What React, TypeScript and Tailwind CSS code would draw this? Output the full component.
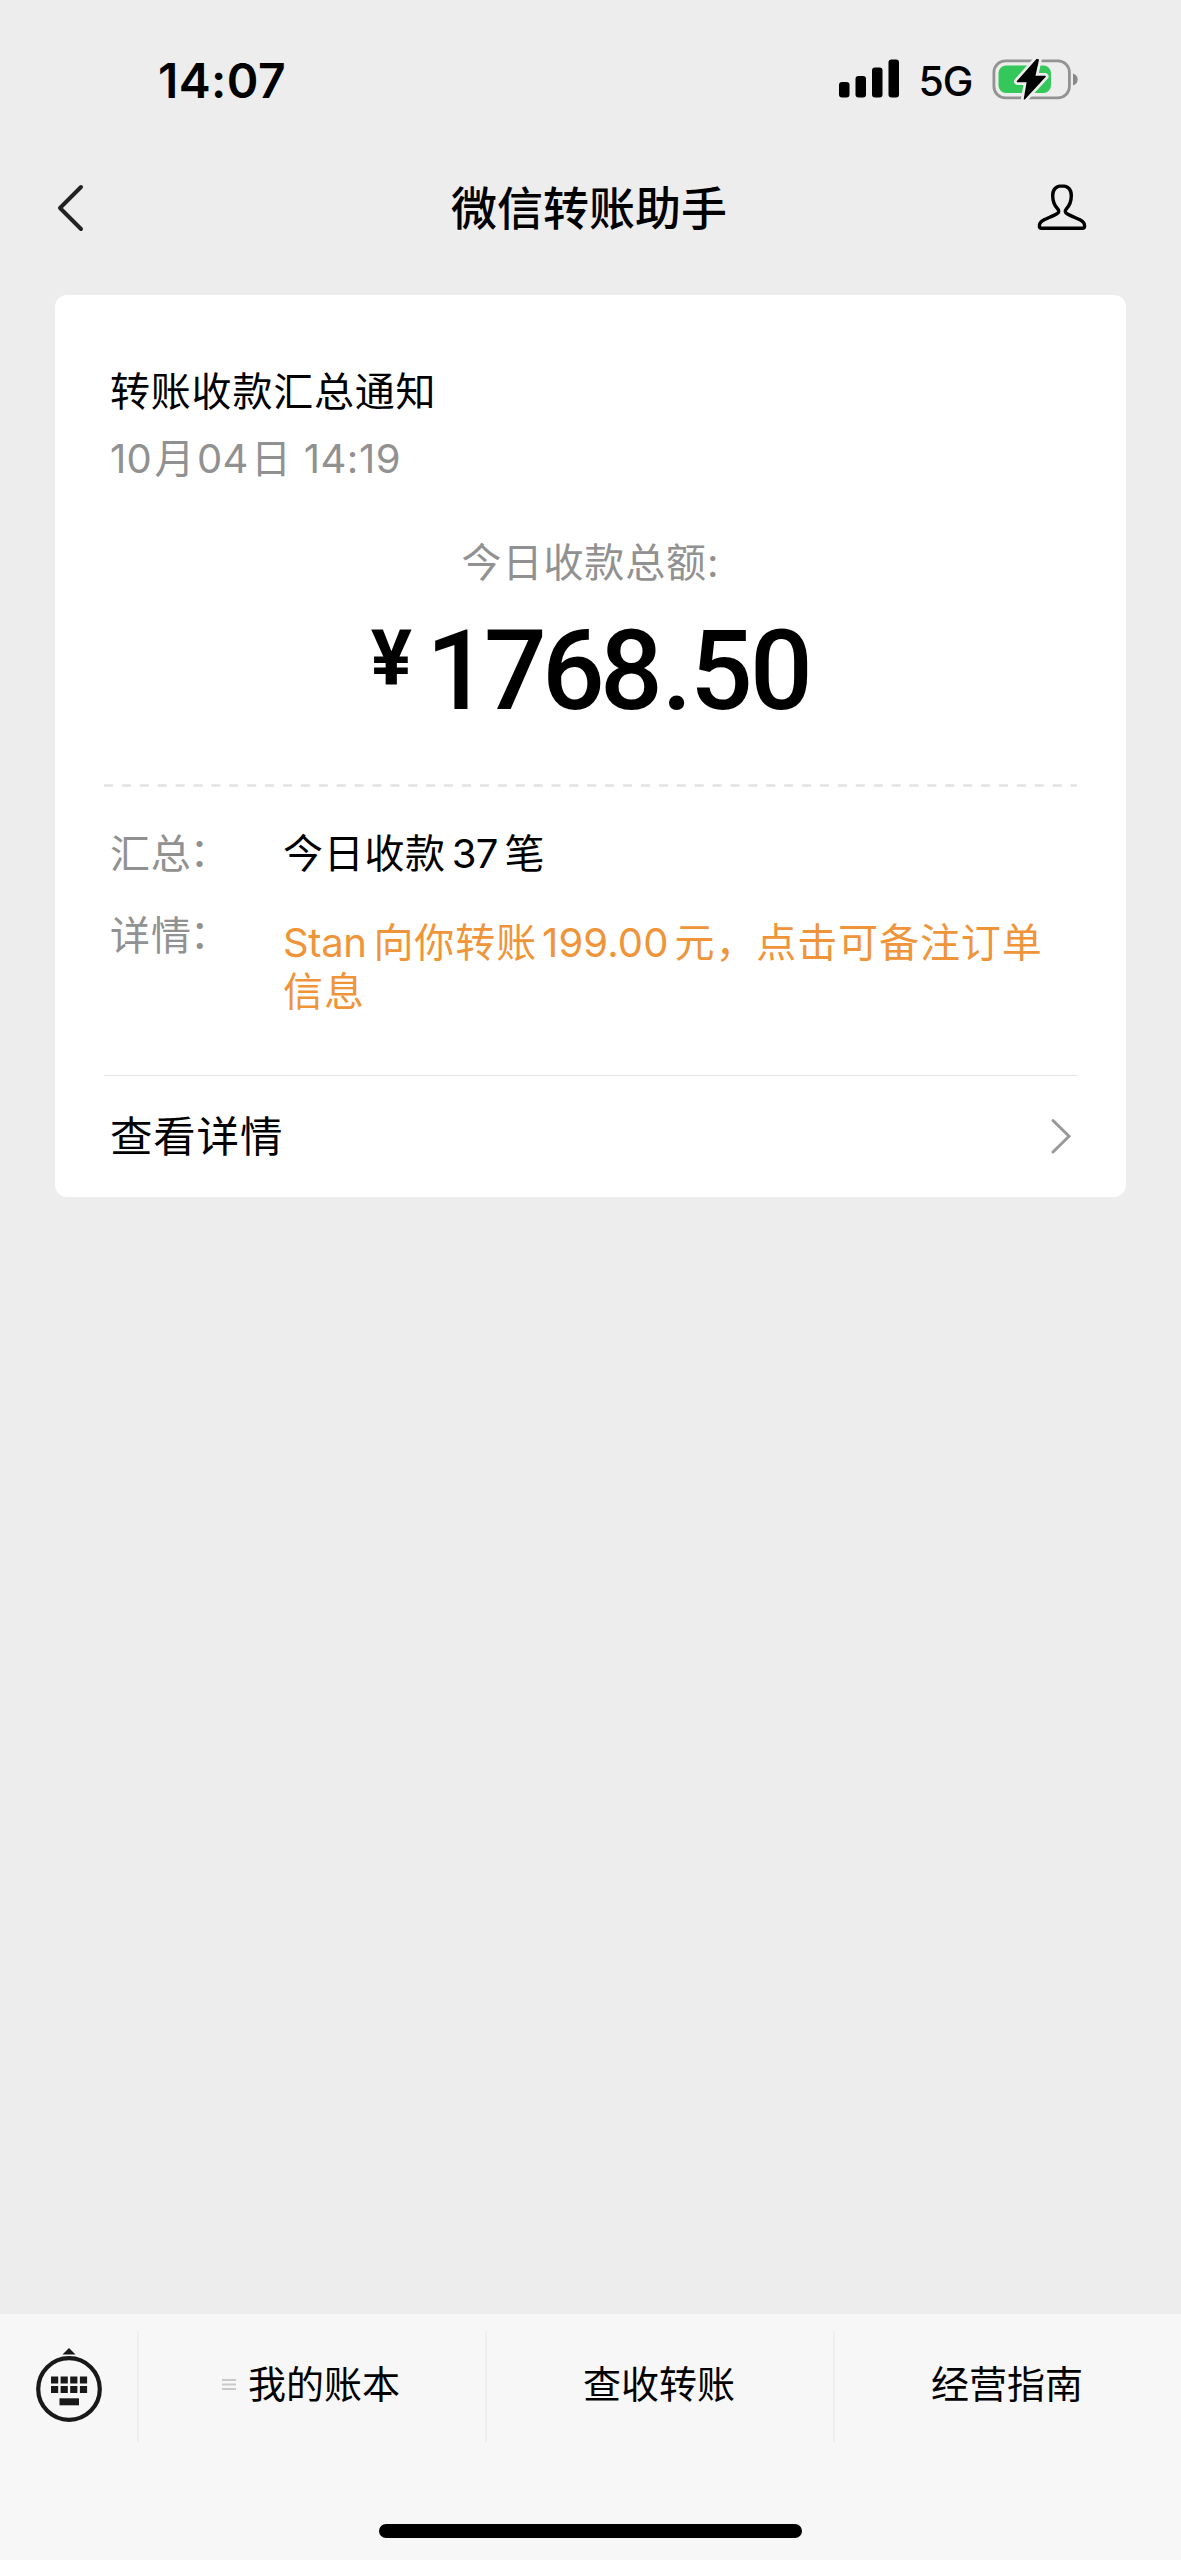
import React from 'react';

const tabs = [
  { label: '我的账本', hasMenu: true },
  { label: '查收转账', hasMenu: false },
  { label: '经营指南', hasMenu: false },
];

function SignalIcon() {
  return (
    <svg width="60" height="39" viewBox="0 0 60 39" fill="#000">
      <rect x="0" y="23" width="10.5" height="15.5" rx="3" />
      <rect x="16.5" y="17" width="10.5" height="21.5" rx="3" />
      <rect x="33" y="8.5" width="10.5" height="30" rx="3" />
      <rect x="49.5" y="0.5" width="10.5" height="38" rx="3" />
    </svg>
  );
}

function BatteryIcon() {
  const bolt = 'M45 0.5 L25.5 22.5 H35.5 L32.5 39.8 L53 17.5 H42.5 L46.2 1 Z';
  return (
    <svg width="87" height="41" viewBox="0 0 87 41" fill="none">
      <rect x="1.9" y="1.9" width="75.5" height="37" rx="11.5" stroke="#949294" strokeWidth="2.8" />
      <path d="M81 14.5c3 .8 4.7 3.2 4.7 6s-1.7 5.2-4.7 6z" fill="#8a888a" />
      <rect x="6.5" y="6.5" width="52.5" height="27.5" rx="7.5" fill="#34c759" />
      <path d={bolt} fill="#ededed" stroke="#ededed" strokeWidth="7" strokeLinejoin="round" />
      <path d={bolt} fill="#000" stroke="#000" strokeWidth="1.5" strokeLinejoin="round" />
    </svg>
  );
}

function PersonIcon() {
  return (
    <svg width="50" height="48" viewBox="0 0 50 48" fill="none" stroke="#000" strokeWidth="3.4" strokeLinejoin="round">
      <path d="M25 2.9c-6.2 0-9.300 3.800-9.300 9.600 0 6 1.900 10.200 4.900 13.300 1.700 1.800 1.600 3.600-.7 4.900-3.700 2.300-9.300 4.300-13.300 6.400-2.700 1.400-4.200 3.200-4.200 5.900 0 1.400.8 2.200 2.200 2.200h40.800c1.400 0 2.200-.8 2.200-2.200 0-2.700-1.500-4.500-4.200-5.900-4-2.100-9.600-4.100-13.300-6.400-2.300-1.300-2.400-3.100-.7-4.900 3-3.100 4.900-7.300 4.900-13.300 0-5.800-3.100-9.600-9.300-9.600z" />
    </svg>
  );
}

function KeyboardIcon() {
  return (
    <svg width="68" height="76" viewBox="0 0 68 76" fill="#191919">
      <path d="M34 1 L40.5 7.5 H27.5 Z" />
      <circle cx="34" cy="42" r="30.8" fill="none" stroke="#191919" strokeWidth="4.2" />
      {[16, 25.6, 35.2, 44.9].map((x) => (
        <React.Fragment key={x}>
          <rect x={x} y="29.5" width="7.2" height="7" />
          <rect x={x} y="39" width="7.2" height="7" />
        </React.Fragment>
      ))}
      <rect x="24.5" y="51.3" width="19.5" height="7" />
    </svg>
  );
}

export default function App() {
  return (
    <div className="w-[1181px] h-[2560px] bg-[#ededed] flex flex-col text-black font-['Inter','Noto_Sans_CJK_SC',sans-serif] overflow-hidden">
      {/* Status bar */}
      <div className="h-[160px] shrink-0 flex items-start justify-between pl-[158px] pr-[102px] pt-[50px]">
        <span className="text-[48px] leading-[61px] font-semibold tracking-[0.4px]">14:07</span>
        <div className="flex items-start pt-[9px]">
          <SignalIcon />
          <span className="ml-5 text-[41px] leading-[45px] font-medium tracking-[-1.3px]">5G</span>
          <div className="ml-5">
            <BatteryIcon />
          </div>
        </div>
      </div>

      {/* Nav bar */}
      <div className="h-[135px] shrink-0 flex items-start justify-between pl-[56px] pr-[94px] pt-[20px]">
        <svg className="mt-[3px] w-[85px]" width="85" height="50" viewBox="0 0 85 50" fill="none" stroke="#222" strokeWidth="4" strokeLinecap="round" strokeLinejoin="round">
          <path d="M25 4 L4 25 L25 46" />
        </svg>
        <h1 className="text-[46px] leading-[57px] font-medium">微信转账助手</h1>
        <div className="w-[50px] mt-[3px]">
          <PersonIcon />
        </div>
      </div>

      {/* Transfer summary card */}
      <div className="mx-[55px] h-[902px] shrink-0 bg-white rounded-xl flex flex-col px-[49px] text-[40px]">
        <div className="px-1.5 pt-[71px]">
          <h2 className="leading-[52px] tracking-[0.8px]">转账收款汇总通知</h2>
          <p className="mt-[15px] leading-[52px] tracking-[0.2px] text-[#919191]">
            10<span className="mx-[2.5px]">月</span>04<span className="ml-[2.5px] mr-[1px]">日</span> <span className="tracking-[0.5px]">14:19</span>
          </p>
        </div>
        <p className="mt-[52px] text-center leading-[52px] tracking-[0.9px] text-[#919191]">今日收款总额:</p>
        <div className="mt-[17px] h-[107px] flex items-start justify-center font-['Roboto',sans-serif]">
          <span className="text-[77px] leading-[107px] font-bold mr-[14px]">¥</span>
          <span className="text-[110.5px] leading-[130px] font-medium tracking-[-2.6px]">
            <span className="tracking-[-4.8px]">176</span><span className="tracking-[-1px]">8</span>.50
          </span>
        </div>

        <svg className="mt-[71px] shrink-0" width="973" height="3" viewBox="0 0 973 3">
          <line x1="0" y1="1.5" x2="973" y2="1.5" stroke="#e2e2e2" strokeWidth="2.5" strokeDasharray="9 8.9" />
        </svg>

        <div className="flex px-1.5 mt-[41px] tracking-[0.7px]">
          <span className="w-[173px] leading-[52px] text-[#919191]">汇总<span className="ml-[-2px] align-[2px] leading-none">：</span></span>
          <span className="leading-[52px]">今日收款<span className="ml-[6px] mr-[7px] tracking-[-0.8px]">37</span>笔</span>
        </div>
        <div className="flex px-1.5 mt-[30px] tracking-[0.9px]">
          <span className="w-[173px] shrink-0 leading-[52px] text-[#919191]">详情<span className="ml-[-2px] align-[2px] leading-none">：</span></span>
          <p className="mt-[8px] leading-[49px] text-[#f0943a] whitespace-nowrap">
            <span className="tracking-[-0.4px]">Stan</span><span className="ml-[7px]">向你转账</span><span className="ml-[5px] mr-[6px] tracking-[0.1px]">199.00</span>元，点击可备注订单<br />信息
          </p>
        </div>

        <div className="mt-auto h-[122px] border-t border-[#e3e3e3] flex items-start justify-between px-1.5 pt-[34px]">
          <span className="text-[42.5px] leading-[53px] tracking-[0.8px]">查看详情</span>
          <svg className="mt-[6px] mr-[-2px]" width="24" height="40" viewBox="0 0 24 40" fill="none" stroke="#999" strokeWidth="3" strokeLinecap="round">
            <path d="M4 4.5 L20 20.3 L4 36" />
          </svg>
        </div>
      </div>

      {/* Bottom menu */}
      <div className="mt-auto h-[246px] shrink-0 bg-[#f7f7f7] flex flex-col items-center">
        <div className="w-full flex pt-[17px]">
          <div className="w-[137px] h-[111px] pl-[35px] pt-[16px]">
            <KeyboardIcon />
          </div>
          {tabs.map((tab) => (
            <div key={tab.label} className="flex-1 h-[111px] border-l-2 border-[#efefef] flex items-start justify-center pt-[28px] pr-[2px]">
              {tab.hasMenu && (
                <svg className="mt-[19px] mr-[12px]" width="14" height="13" viewBox="0 0 14 13" stroke="#c9c9c9" strokeWidth="2">
                  <path d="M0 2 H14 M0 6.5 H14 M0 11 H14" />
                </svg>
              )}
              <span className="text-[38px] leading-[51px]">{tab.label}</span>
            </div>
          ))}
        </div>
        <div className="mt-[82px] w-[423px] h-[14px] rounded-full bg-black" />
      </div>
    </div>
  );
}
